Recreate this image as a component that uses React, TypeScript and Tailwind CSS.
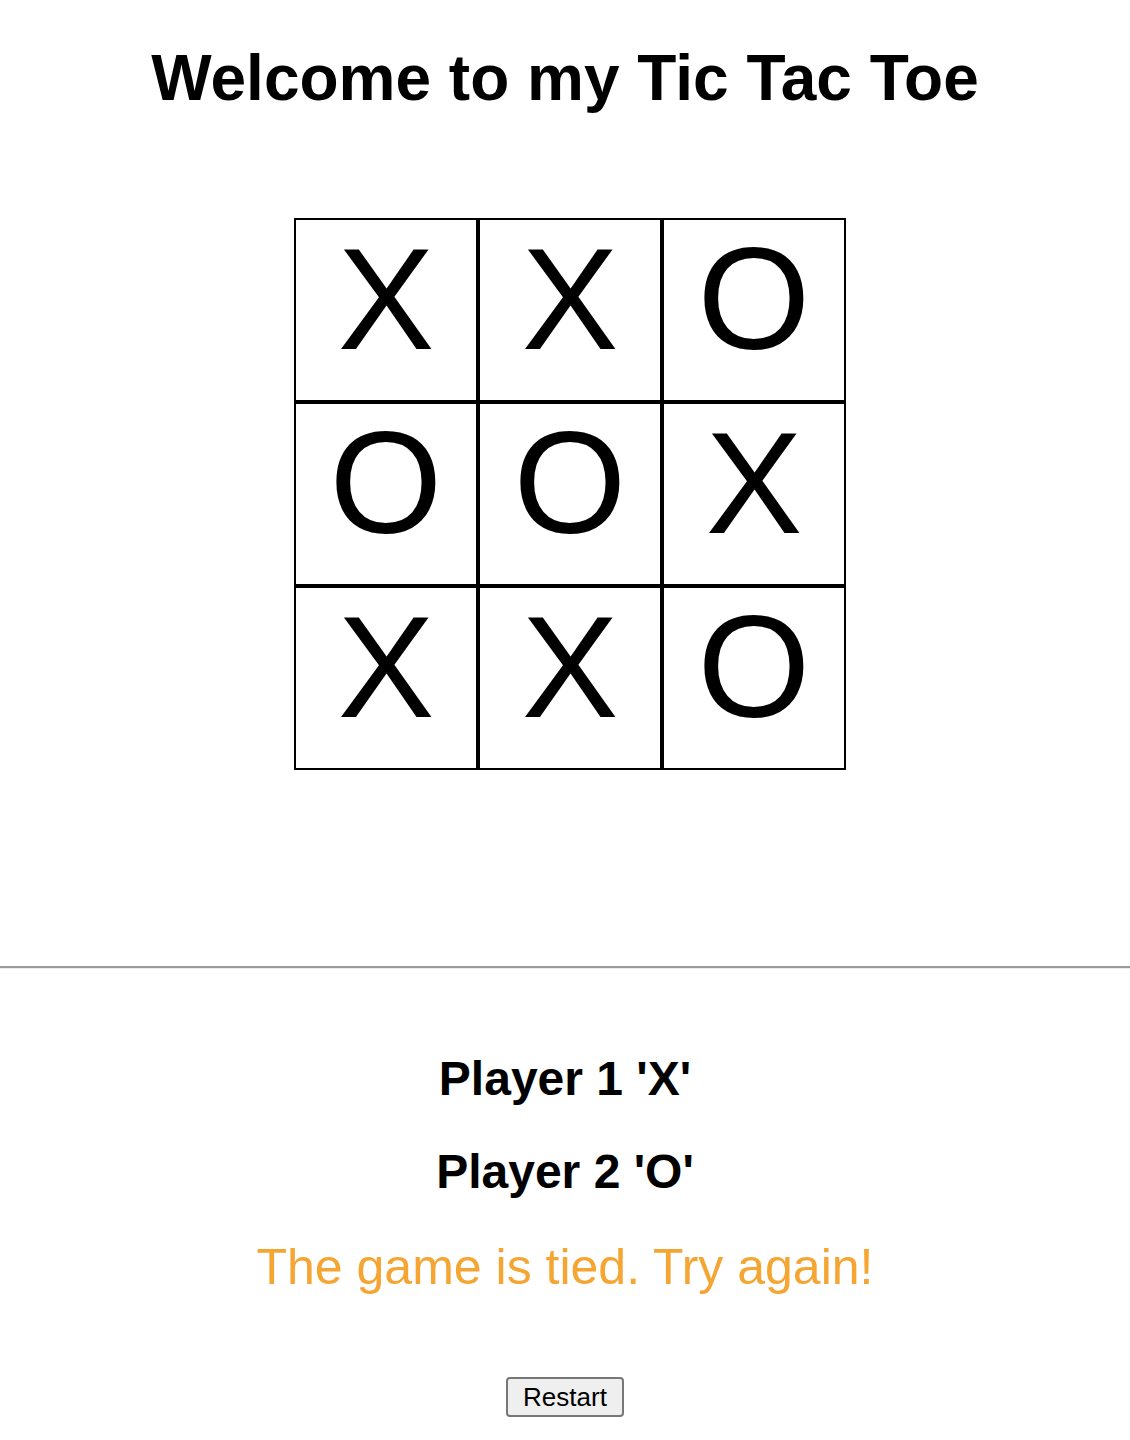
import React from "react";

const board = ["X", "X", "O", "O", "O", "X", "X", "X", "O"];

const App = () => {
  return (
    <div className="min-h-screen bg-white font-['Liberation_Sans',Arial,sans-serif] text-black">
      <h1 className="pt-[41px] text-center text-[64px] font-bold leading-[74px]">
        Welcome to my Tic Tac Toe
      </h1>

      <div className="mt-[103px] flex justify-center pl-[10px]">
        <div className="grid w-[552px] grid-cols-3">
          {board.map((mark, i) => (
            <div
              key={i}
              className="flex h-[184px] w-[184px] items-center justify-center border-2 border-black pb-[22px] text-[145px] leading-none"
            >
              {mark}
            </div>
          ))}
        </div>
      </div>

      <div className="mt-[196px] border-t-2 border-b border-t-[#9a9a9a] border-b-[#ececec]" />

      <div className="flex flex-col items-center">
        <h2 className="mt-[82px] text-[48px] font-bold leading-[55px]">
          Player 1 'X'
        </h2>
        <h2 className="mt-[38px] text-[48px] font-bold leading-[55px]">
          Player 2 'O'
        </h2>
        <p className="mt-[39px] text-[50px] leading-[58px] text-[#f5a532]">
          The game is tied. Try again!
        </p>
        <button className="mt-[81px] h-[40px] rounded-[4px] border-2 border-[#777777] bg-[#efefef] px-[15px] text-[26px] leading-[30px]">
          Restart
        </button>
      </div>
    </div>
  );
};

export default App;
